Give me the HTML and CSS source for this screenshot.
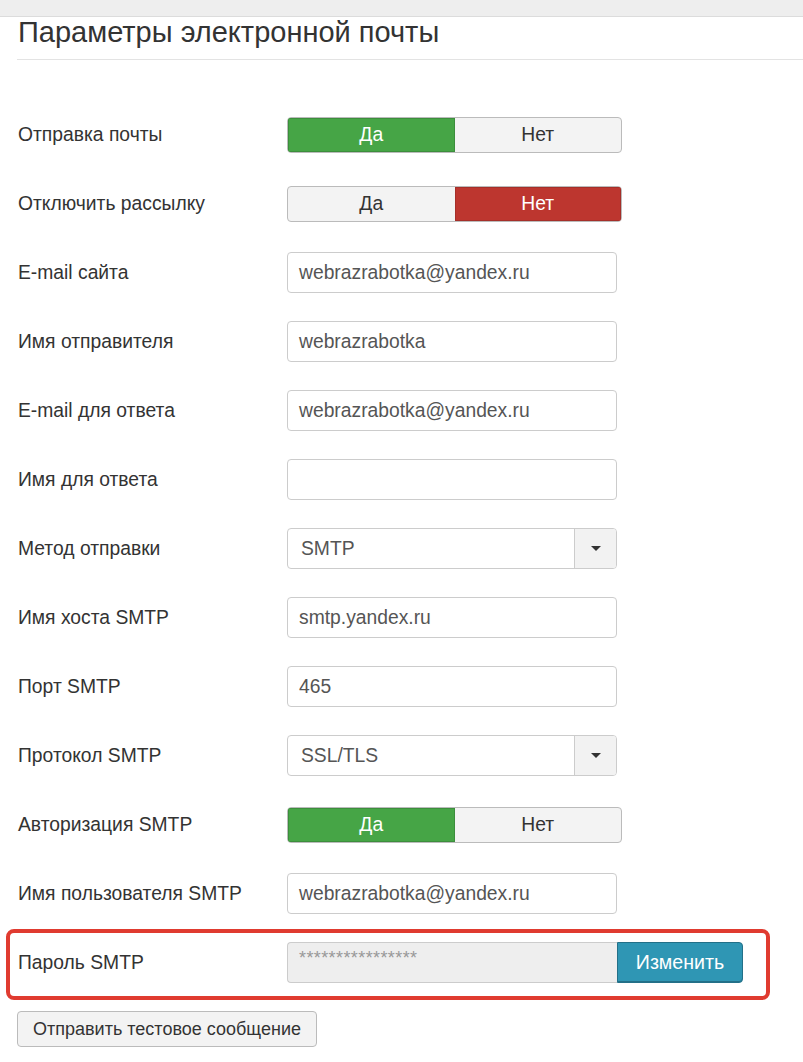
FILE: index.html
```html
<!DOCTYPE html>
<html lang="ru">
<head>
<meta charset="utf-8">
<title>Параметры электронной почты</title>
<link rel="stylesheet" href="styles.css">
</head>
<body>
<div class="topbar"></div>
<div class="page">
  <h2 class="title">Параметры электронной почты</h2>
  <div class="form">
    <div class="row">
      <label class="lbl">Отправка почты</label>
      <div class="toggle"><span class="opt on-yes">Да</span><span class="opt">Нет</span></div>
    </div>
    <div class="row">
      <label class="lbl">Отключить рассылку</label>
      <div class="toggle"><span class="opt">Да</span><span class="opt on-no">Нет</span></div>
    </div>
    <div class="row">
      <label class="lbl">E-mail сайта</label>
      <div class="input">webrazrabotka@yandex.ru</div>
    </div>
    <div class="row">
      <label class="lbl">Имя отправителя</label>
      <div class="input">webrazrabotka</div>
    </div>
    <div class="row">
      <label class="lbl">E-mail для ответа</label>
      <div class="input">webrazrabotka@yandex.ru</div>
    </div>
    <div class="row">
      <label class="lbl">Имя для ответа</label>
      <div class="input"></div>
    </div>
    <div class="row">
      <label class="lbl">Метод отправки</label>
      <div class="select"><span class="sel-val">SMTP</span><span class="sel-arrow"><span class="caret"></span></span></div>
    </div>
    <div class="row">
      <label class="lbl">Имя хоста SMTP</label>
      <div class="input">smtp.yandex.ru</div>
    </div>
    <div class="row">
      <label class="lbl">Порт SMTP</label>
      <div class="input">465</div>
    </div>
    <div class="row">
      <label class="lbl">Протокол SMTP</label>
      <div class="select"><span class="sel-val">SSL/TLS</span><span class="sel-arrow"><span class="caret"></span></span></div>
    </div>
    <div class="row">
      <label class="lbl">Авторизация SMTP</label>
      <div class="toggle"><span class="opt on-yes">Да</span><span class="opt">Нет</span></div>
    </div>
    <div class="row">
      <label class="lbl">Имя пользователя SMTP</label>
      <div class="input">webrazrabotka@yandex.ru</div>
    </div>
    <div class="highlight">
      <div class="row">
        <label class="lbl">Пароль SMTP</label>
        <div class="pw-group">
          <div class="pw-input">****************</div>
          <button class="btn-change" type="button">Изменить</button>
        </div>
      </div>
    </div>
  </div>
  <button class="btn-test" type="button">Отправить тестовое сообщение</button>
</div>
</body>
</html>
```

FILE: styles.css
```css
* { box-sizing: border-box; }
html, body { margin: 0; padding: 0; background: #fff; }
body {
  font-family: "Liberation Sans", Arial, sans-serif;
  color: #333;
  font-size: 19.3px;
}
.topbar {
  height: 17px;
  background: #eeeeee;
  border-bottom: 1px solid #dcdcdc;
}
.page {
  padding-left: 17px;
}
.title {
  margin: 0;
  font-weight: normal;
  font-size: 29px;
  line-height: 30px;
  padding: 0 0 12px 1px;
  border-bottom: 1px solid #e3e3e3;
  color: #333;
}
.form {
  display: flex;
  flex-direction: column;
  gap: 28px;
  margin-top: 54px;
}
.row {
  display: flex;
  align-items: center;
  height: 41px;
}
.lbl {
  width: 270px;
  flex: none;
  padding-left: 1px;
}
.toggle {
  display: flex;
  width: 335px;
  height: 36px;
  border: 1px solid #bbb;
  border-radius: 4px;
  overflow: hidden;
  background: #f3f3f3;
}
.opt {
  flex: 1;
  display: flex;
  align-items: center;
  justify-content: center;
  color: #333;
}
.opt.on-yes {
  background: #46a546;
  color: #fff;
  box-shadow: inset 0 0 0 1px #3c8e3c;
}
.opt.on-no {
  background: #bd362f;
  color: #fff;
  box-shadow: inset 0 0 0 1px #a52f29;
}
.input {
  width: 330px;
  height: 41px;
  border: 1px solid #ccc;
  border-radius: 4px;
  padding: 0 11px;
  display: flex;
  align-items: center;
  color: #555;
}
.select {
  width: 330px;
  height: 41px;
  border: 1px solid #ccc;
  border-radius: 4px;
  display: flex;
  overflow: hidden;
  color: #555;
}
.sel-val {
  flex: 1;
  display: flex;
  align-items: center;
  padding-left: 13px;
}
.sel-arrow {
  width: 42px;
  background: #f2f2f2;
  border-left: 1px solid #ccc;
  display: flex;
  align-items: center;
  justify-content: center;
}
.caret {
  width: 0;
  height: 0;
  border-left: 5px solid transparent;
  border-right: 5px solid transparent;
  border-top: 5px solid #333;
}
.highlight {
  margin: -13px 0 0 -11px;
  width: 764px;
  border: 4px solid #e03b30;
  border-radius: 8px;
  padding: 9px 0 13px 7px;
}
.pw-group {
  display: flex;
  height: 41px;
}
.pw-input {
  width: 330px;
  height: 41px;
  background: #eeeeee;
  border: 1px solid #ccc;
  border-right: none;
  border-radius: 4px 0 0 4px;
  padding: 5px 11px 0;
  color: #999;
  font-size: 18px;
  line-height: 20px;
  letter-spacing: 0.4px;
}
.btn-change {
  width: 126px;
  height: 41px;
  background: #2f96b4;
  border: 1px solid #237088;
  border-radius: 0 4px 4px 0;
  color: #fff;
  font-family: "Liberation Sans", Arial, sans-serif;
  font-size: 19.6px;
  padding: 0;
  box-shadow: inset 0 -1px 0 #237088;
}
.btn-test {
  display: block;
  margin-top: 11px;
  width: 300px;
  height: 36px;
  background: #f3f3f3;
  border: 1px solid #bbb;
  border-radius: 4px;
  color: #333;
  font-family: "Liberation Sans", Arial, sans-serif;
  font-size: 18px;
  padding: 0;
}
```
